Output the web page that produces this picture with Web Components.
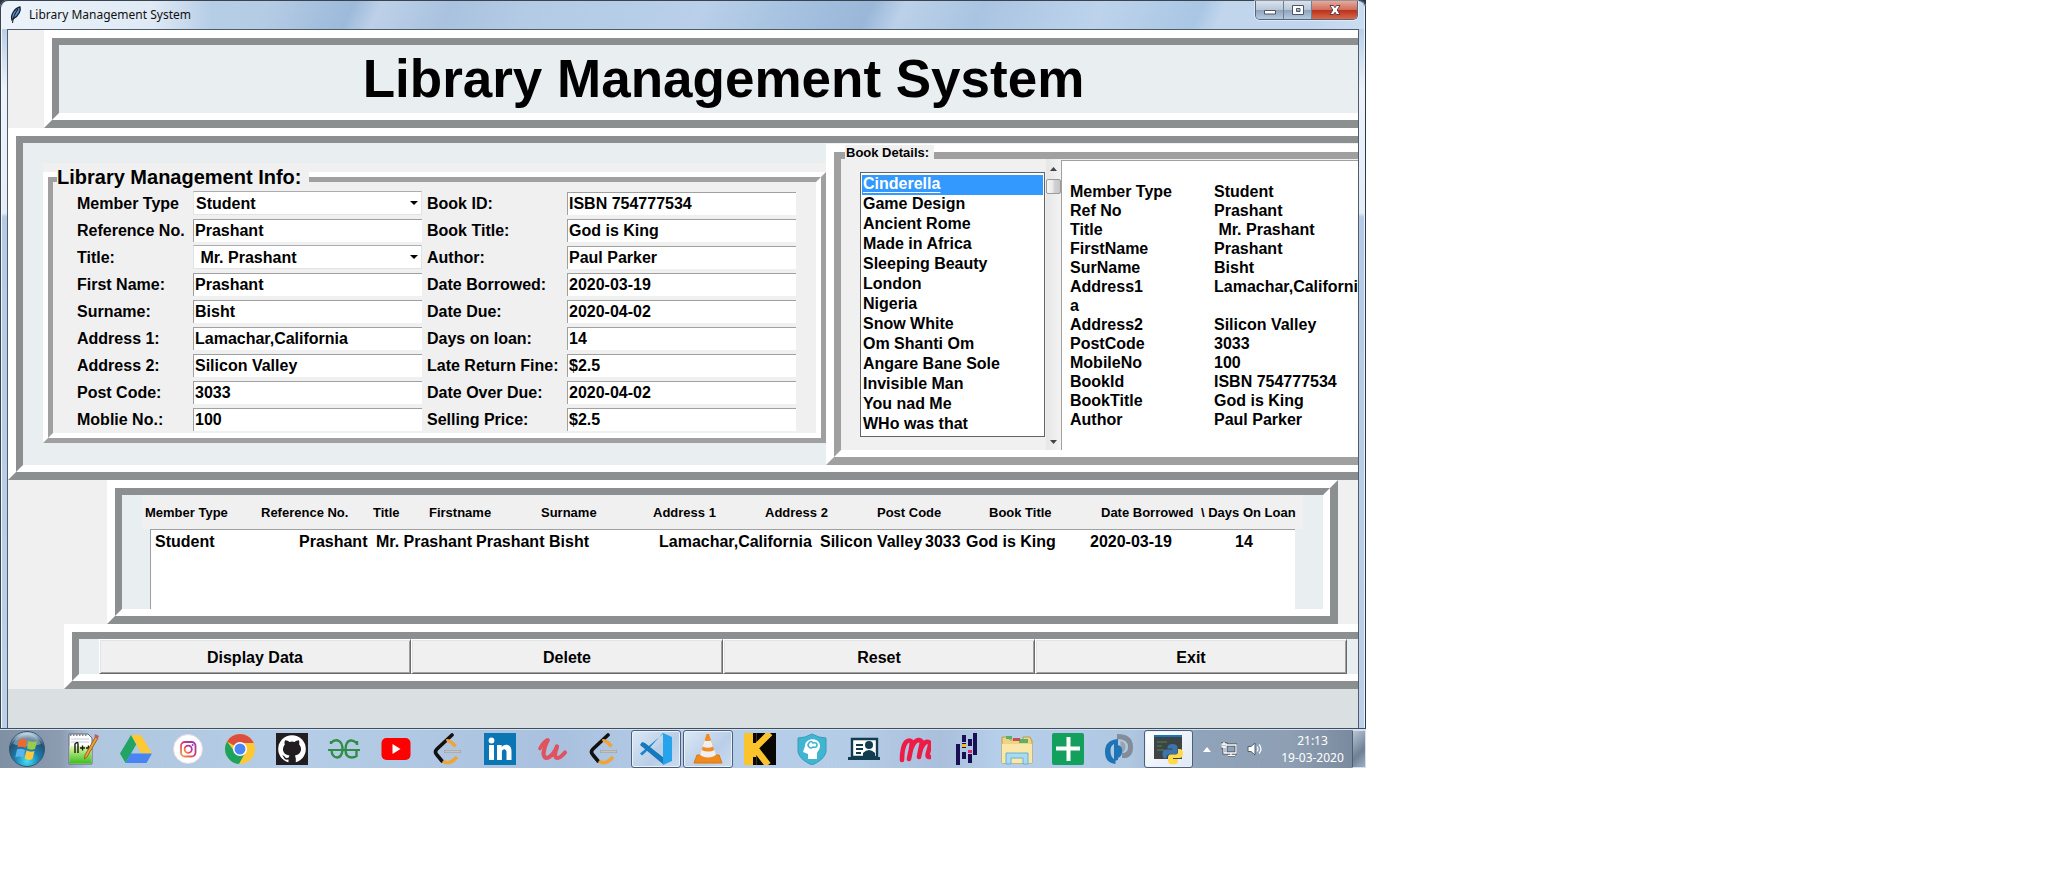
<!DOCTYPE html>
<html lang="en">
<head>
<meta charset="utf-8">
<title>Library Management System</title>
<style>
html { background: #fff; }
body { margin: 0; font: bold 16px/19px "Liberation Sans", Arial, sans-serif; color: #000; }
</style>
</head>
<body>
<desk-top>
  <app-window caption="Library Management System">
    <ridge-frame class="title"><h1>Library Management System</h1></ridge-frame>
    <ridge-frame class="main">
      <label-frame class="info" caption="Library Management Info:"><member-form></member-form></label-frame>
      <label-frame class="books" caption="Book Details:" heavy>
        <book-list></book-list>
        <scroll-bar></scroll-bar>
        <detail-text></detail-text>
      </label-frame>
    </ridge-frame>
    <ridge-frame class="records"><record-table></record-table></ridge-frame>
    <ridge-frame class="actions"><action-bar></action-bar></ridge-frame>
  </app-window>
  <task-bar></task-bar>
</desk-top>

<script>
function define(name, html, setup) {
  customElements.define(name, class extends HTMLElement {
    constructor() {
      super();
      const t = document.createElement('template');
      t.innerHTML = html;
      this.attachShadow({ mode: 'open' }).append(t.content.cloneNode(true));
    }
    connectedCallback() { if (setup) setup(this, this.shadowRoot); }
  });
}

define('desk-top', `
<style>
:host { display: flex; flex-direction: column; width: 100%; max-width: 1366px; background: #2b3240; overflow: hidden; }
</style><slot></slot>`);

define('app-window', `
<style>
:host { display: block; border-radius: 7px 7px 0 0; padding: 0 8px 0 7px; box-shadow: inset 1px 1px #3a4350, inset -1px 0 #2c3a4a, inset 2px 2px #f2f7fc, inset -2px 0 #e8f1fa;
  background: linear-gradient(#fff0 0, #fff0 30px, #eef3fa 90px, #e4ecf6 213px, #b4cae6 217px, #bcd0e8 100%) 0 0 / 100% 100%, #b9cfe8; }
header { display: flex; justify-content: space-between; height: 29px; margin: 0 -6px 0 -5px; padding: 0 6px 0 5px; border-radius: 6px 6px 0 0; 
  background: linear-gradient(90deg, #eef4fafa 0, #dfeaf5 150px, #b6cde6 210px, #b6cde600 300px), 
  linear-gradient(115deg, #b4cbe4 0, #b4cbe4 240px, #9dbadb 320px, #bdd0e8 345px, #a9c2df 410px, #b3cbe5 480px, #b9cfea 640px, #aac5e2 700px, #9ab7d9 790px, #bcd1e9 820px, #a9c4e2 890px, #bdd3ec 1000px, #a9c6e4 1090px, #c1d5ec 1110px, #c1d6ee 1200px, #e6eff8 1366px);
  background-clip: padding-box; border-top: 1px solid #3a4350; box-sizing: border-box; }
.caption { display: flex; gap: 6px; align-items: center; font: 12px/16px "Noto Sans", "Open Sans", sans-serif; color: #111; padding: 0 0 0 2px; }
.buttons { display: flex; height: 19px; border: 1px solid #56657a; border-top: 0; border-radius: 0 0 5px 5px; overflow: hidden; box-shadow: 0 0 0 1px #ffffff70; box-sizing: border-box; }
button { display: grid; place-items: center; width: 28px; padding: 0; border: 0; border-right: 1px solid #6f8094; background: linear-gradient(#d9e3ee 0, #b9c7d8 48%, #8fa3bc 52%, #b5cadf 100%); }
button.close { width: 45px; border: 0; background: linear-gradient(#e9a99b 0, #d0705d 48%, #b9321c 52%, #d9684a 100%); }
svg { display: block; }
main { display: flow-root; border: 1px solid #4f5c6b; border-bottom: 0; background: #f0f0f0; overflow: hidden; margin-right: -1px; }
main::after { content: ""; display: block; height: 39px; background: #dadfe1; }
::slotted(*) { display: block; }
::slotted(.title) { --fill: #e9eef1; margin: 0 -45px 0 36px; }
::slotted(.main) { margin-right: -45px; }
::slotted(.records) { margin: 0 20px 0 99px; }
::slotted(.actions) { margin: 0 -45px 0 56px; }
</style>
<header>
  <div class="caption">
    <svg width="14" height="18" viewBox="0 0 14 18"><path d="M3 14C1 9 6 2 11 1c1 3-1 9-7 12z" fill="#5c8fc8" stroke="#14202e" stroke-width="1.3"/><path d="M3.500 17C4 12 6 7 9 3" stroke="#10151c" fill="none"/></svg>
    <span id="cap"></span>
  </div>
  <div class="buttons">
    <button aria-label="Minimize"><svg width="14" height="14"><path d="M1.500 7.500h11v3.500h-11z" fill="#fff" stroke="#4c5666"/></svg></button>
    <button aria-label="Maximize"><svg width="14" height="14"><path d="M1.500 2.500h11v9h-11zM5.500 5.500v3h3.500v-3z" fill="#fff" fill-rule="evenodd" stroke="#4c5666"/></svg></button>
    <button class="close" aria-label="Close"><svg width="14" height="14"><path d="M2 2.500h3.500L7 4.700l1.500-2.200H12L9.200 7l2.800 4.500H8.500L7 9.300l-1.500 2.200H2L4.800 7z" fill="#fff" stroke="#5b4048"/></svg></button>
  </div>
</header>
<main><slot></slot></main>`, (el, r) => { r.getElementById('cap').textContent = el.getAttribute('caption'); });

define('ridge-frame', `
<style>
:host { display: block; }
.outer { border: 8px solid; border-color: #fff #8c8f8f #8c8f8f #fff; }
.inner { border: solid; border-width: 7px; border-color: #8c8f8f #fff #fff #8c8f8f; background: #e9eef1; display: flex; }
::slotted(h1) { flex: 1; margin: 0; padding: 4px 0; font-size: 53px; line-height: 60px; text-align: center; white-space: nowrap; }
::slotted(.info) { flex: 0 0 783px; margin: 20px 0 22px 20px; }
::slotted(.books) { flex: 1; }
::slotted(record-table), ::slotted(action-bar) { flex: 1; min-width: 0; }
</style><div class="outer"><div class="inner"><slot></slot></div></div>`);

define('label-frame', `
<style>
:host { display: block; position: relative; background: #f0f0f0; padding-top: 9px; box-sizing: border-box; --o: 5px; --i: 5px; }
:host([heavy]) { --o: 8px; --i: 7px; padding-top: 1px; }
.outer { border: var(--o) solid; border-color: #fff #a0a0a0 #a0a0a0 #fff; height: 100%; box-sizing: border-box; }
.inner { border: var(--i) solid; border-color: #a0a0a0 #fff #fff #a0a0a0; height: 100%; box-sizing: border-box; display: flex; }
.legend { position: absolute; left: 14px; top: 2px; background: #f0f0f0; padding-right: 8px; font-size: 20px; line-height: 24px; white-space: nowrap; }
:host([heavy]) .legend { left: 19px; top: 2px; font-size: 13px; line-height: 16px; padding: 0 5px 0 1px; }
::slotted(detail-text), ::slotted(member-form) { flex: 1; }
</style><div class="outer"><div class="inner"><slot></slot></div></div><div class="legend" id="cap"></div>`,
(el, r) => { r.getElementById('cap').textContent = el.getAttribute('caption'); });

define('form-field', `
<style>
:host { display: grid; grid-template-columns: var(--label, 116px) minmax(0, 1fr); align-items: center; height: 24px; }
label { white-space: nowrap; }
.box { display: grid; align-items: center; }
input, select { grid-area: 1 / 1; font: inherit; color: inherit; width: 100%; box-sizing: border-box; margin: 0; border-radius: 0; background: #fff; outline: 0; }
input { height: 23px; border: 0 solid #a0a0a0; border-width: 1px 0 0 1px; padding: 0 1px; }
select { height: 24px; appearance: none; border: 1px solid #e3e3e3; border-top-color: #abadb3; padding: 0 20px 0 2px; }
svg { grid-area: 1 / 1; justify-self: end; margin-right: 4px; pointer-events: none; }
</style><label for="f"></label><div class="box"></div>`, (el, r) => {
  r.querySelector('label').textContent = el.getAttribute('label');
  const v = el.getAttribute('value'), box = r.querySelector('.box');
  if (el.hasAttribute('choice')) {
    box.innerHTML = '<select id="f"><option></option></select><svg width="8" height="4"><path d="M0 0h8L4 4z"/></svg>';
    box.querySelector('option').textContent = v;
  } else {
    box.innerHTML = '<input id="f" type="text">';
    box.firstChild.value = v;
  }
});

define('member-form', `
<style>
:host { display: block; }
form { display: grid; grid-template-columns: 345px 369px; column-gap: 5px; row-gap: 3px; padding: 9px 20px 2px 24px; }
form-field:nth-child(even) { --label: 140px; }
</style>
<form>
<form-field label="Member Type" value="Student" choice></form-field><form-field label="Book ID:" value="ISBN 754777534"></form-field>
<form-field label="Reference No." value="Prashant"></form-field><form-field label="Book Title:" value="God is King"></form-field>
<form-field label="Title:" value="&nbsp;Mr. Prashant" choice></form-field><form-field label="Author:" value="Paul Parker"></form-field>
<form-field label="First Name:" value="Prashant"></form-field><form-field label="Date Borrowed:" value="2020-03-19"></form-field>
<form-field label="Surname:" value="Bisht"></form-field><form-field label="Date Due:" value="2020-04-02"></form-field>
<form-field label="Address 1:" value="Lamachar,California"></form-field><form-field label="Days on loan:" value="14"></form-field>
<form-field label="Address 2:" value="Silicon Valley"></form-field><form-field label="Late Return Fine:" value="$2.5"></form-field>
<form-field label="Post Code:" value="3033"></form-field><form-field label="Date Over Due:" value="2020-04-02"></form-field>
<form-field label="Moblie No.:" value="100"></form-field><form-field label="Selling Price:" value="$2.5"></form-field>
</form>`);

define('book-list', `
<style>
:host { display: block; padding: 13px 1px 0 19px; }
select { display: block; width: 185px; height: 265px; box-sizing: border-box; margin: 0; padding: 2px 1px; border: 1px solid #646464; border-radius: 0; font: inherit; color: #000; background: #fff; overflow: hidden; scrollbar-width: none; outline: 0; }
option { display: block; padding: 0 1px; height: 20px; min-height: 20px; font-weight: bold; line-height: 20px; box-sizing: border-box; }
option:checked { color: #fff; background: linear-gradient(#3399ff, #3399ff); text-decoration: underline; text-underline-offset: 3px; }
</style>
<select size="13" aria-label="Books">
<option selected>Cinderella</option><option>Game Design</option><option>Ancient Rome</option><option>Made in Africa</option><option>Sleeping Beauty</option><option>London</option><option>Nigeria</option><option>Snow White</option><option>Om Shanti Om</option><option>Angare Bane Sole</option><option>Invisible Man</option><option>You nad Me</option><option>WHo was that</option>
</select>`);

define('scroll-bar', `
<style>
:host { display: flex; flex-direction: column; align-items: center; width: 15px; background: linear-gradient(90deg, #e6e6e6, #f3f3f3); }
svg { margin: 8px 0; }
.thumb { width: 13px; height: 13px; border: 1px solid #9a9a9a; border-radius: 2px; background: linear-gradient(90deg, #f6f6f6, #e8e8ea 48%, #d3d3d6 52%, #c6c6ca); }
.down { margin-top: auto; margin-bottom: 6px; }
</style>
<svg width="7" height="4"><path d="M0 4h7L3.500 0z" fill="#444"/></svg>
<div class="thumb"></div>
<svg class="down" width="7" height="4"><path d="M0 0h7L3.500 4z" fill="#444"/></svg>`);

define('detail-text', `
<style>
:host { display: flex; padding-top: 1px; }
textarea { flex: 1; min-width: 0; box-sizing: border-box; margin: 0; border: 0 solid #a0a0a0; border-width: 1px 0 0 1px; border-radius: 0; padding: 2px 8px; font: inherit; line-height: 19px; color: #000; background: #fff; resize: none; overflow: hidden; outline: 0; tab-size: 144px; word-break: break-all; }
</style><textarea aria-label="Member details"></textarea>`, (el, r) => {
  r.querySelector('textarea').value = '\n' + [
    ['Member Type', 'Student'], ['Ref No', 'Prashant'], ['Title', '\u00a0Mr. Prashant'], ['FirstName', 'Prashant'], ['SurName', 'Bisht'],
    ['Address1', 'Lamachar,California'], ['Address2', 'Silicon Valley'], ['PostCode', '3033'], ['MobileNo', '100'],
    ['BookId', 'ISBN 754777534'], ['BookTitle', 'God is King'], ['Author', 'Paul Parker']].map(p => p.join('\t')).join('\n');
});

define('record-table', `
<style>
:host { display: block; }
table, thead, tbody { display: block; }
tr { display: grid; justify-content: start; }
th, td { padding: 0; text-align: left; white-space: nowrap; }
thead { background: #f0f0f0; margin: 0 20px; font-size: 13px; }
thead tr { grid-template-columns: 116px 112px 56px 112px 112px 112px 112px 112px 112px 100px auto; padding: 2px 3px 0; line-height: 32px; }
tbody { margin: 0 28px; background: #fff; border: solid #a0a0a0; border-width: 1px 0 0 1px; height: 79px; }
tbody tr { grid-template-columns: 144px 77px 100px 73px 110px 161px 105px 41px 124px 145px auto; padding: 2px 4px; }
</style>
<table><thead><tr><th>Member Type</th><th>Reference No.</th><th>Title</th><th>Firstname</th><th>Surname</th><th>Address 1</th><th>Address 2</th><th>Post Code</th><th>Book Title</th><th>Date Borrowed</th><th>\\ Days On Loan</th></tr></thead>
<tbody><tr><td>Student</td><td>Prashant</td><td>Mr. Prashant</td><td>Prashant</td><td>Bisht</td><td>Lamachar,California</td><td>Silicon Valley</td><td>3033</td><td>God is King</td><td>2020-03-19</td><td>14</td></tr></tbody></table>`);

define('action-bar', `
<style>
:host { display: flex; padding: 0 41px 0 20px; }
button { flex: 1; height: 35px; font: inherit; color: inherit; padding: 1px 0 0; background: #f0f0f0; border: 1px solid; border-color: #fff #696969 #696969 #fff; border-radius: 0; box-shadow: inset 1px 1px #e3e3e3, inset -1px -1px #a0a0a0; }
</style><button>Display Data</button><button>Delete</button><button>Reset</button><button>Exit</button>`);

const leet = `<path d="M20 2 5 16q-3 3 0 6l5 6" fill="none" stroke="#111" stroke-width="3.600" stroke-linecap="round"/><path d="M14.500 8q3-1.500 9 5.500" fill="none" stroke="#f0a436" stroke-width="3.500"/><path d="M11 28q6 5 14-4" fill="none" stroke="#f0a436" stroke-width="3.500"/><path d="M12 18.500h17" stroke="#999" stroke-width="3"/><path d="M12.500 18.500h16" stroke="#c3c3c3" stroke-width="2"/>`;
const icons = [
['Notepad++', `<path d="M1 1h19l4 4v26H1z" fill="#fff" stroke="#667"/><path d="M1.500 13h22v17.500h-22z" fill="url(#npp)"/><path d="M2 2h18" stroke="#888" stroke-dasharray="1.500 1.500" stroke-width="2"/><path d="M3 6h18M3 9h18" stroke="#c3ccd8"/><path d="M7 20v-9q3-3 3 0v9M12 15h5M14.500 12.500v5M18 15h5M20.500 12.500v5" fill="none" stroke="#141a10" stroke-width="1.400"/><path d="m28 3 2 2-11 19-2.500 2 .5-4z" fill="#e9a53a" stroke="#9c6420"/><path d="m27 1 4 2-1.500 3-3-2z" fill="#c8565a"/>`],
['Google Drive', `<path d="M11 2h10l11 18.500H21.500z" fill="#fbc934"/><path d="M11 2 0 20.500 5.500 30l10.700-18.500z" fill="#21a464"/><path d="M10.500 20.500H32L26.500 30h-21z" fill="#4a84f0"/>`],
['Instagram', `<circle cx="16" cy="16" r="14.500" fill="#fff" stroke="#e6d9e2"/><rect x="9" y="9" width="14.500" height="14.500" rx="4" fill="none" stroke="url(#ig)" stroke-width="1.800"/><circle cx="16.200" cy="16.200" r="3.600" fill="none" stroke="url(#ig)" stroke-width="1.800"/><circle cx="20.600" cy="12" r="1" fill="#9a36b8"/>`],
['Chrome', `<circle cx="16" cy="16" r="15" fill="#fcc934"/><path d="M16 16 3 8.500A15 15 0 0 1 29 8.500L29.600 10H16z" fill="#db4f40"/><path d="M3 8.500A15 15 0 0 0 15 31l6-11-10.500-1.500z" fill="#1da260"/><circle cx="16" cy="16" r="7" fill="#fff"/><circle cx="16" cy="16" r="5.500" fill="#4a87f4"/>`],
['GitHub', `<path d="M0 0h32v32H0z" fill="#211d20"/><circle cx="16" cy="16" r="13.800" fill="#fff"/><path d="M12.500 30.500v-4c-3 .6-4.200-.5-5-2.500l-1.300-1.500c2.500-.4 2.500 2.500 5 2.500l1.500-.5.800-2C8 21.700 6.800 18.500 7 15.500q.2-2.200 1.800-4c-.5-1.500-.3-3 .3-4.300 2 .1 3.200.8 4.300 1.700q2.600-.7 5.200 0c1.200-.9 2.600-1.600 4.300-1.700q.9 2.200.3 4.300 1.700 1.800 1.800 4c.2 3-1.300 6.200-6 7l.8 3v5z" fill="#211d20"/>`],
['GeeksforGeeks', `<path d="M0 17h32" stroke="#2f8d46" stroke-width="2"/><path d="M3 11V8M3 10q3-3.500 7-2.500 5 2 4.500 10-1 7-5.500 7-5-.5-5.500-7M29 8v4M28.500 10q-3-3-6-2.500-5 1-5 9 0 8 6 8 3 0 5-1.500V17" fill="none" stroke="#2f8d46" stroke-width="2.400"/>`],
['YouTube', `<rect x="1.500" y="5" width="29" height="22" rx="5" fill="#f00"/><path d="m12.500 11 8 5-8 5z" fill="#fff"/>`],
['LeetCode', leet],
['LinkedIn', `<path d="M0 0h32v32H0z" fill="#0a76b4"/><circle cx="7.500" cy="7.500" r="2.900" fill="#fff"/><path d="M5 12h5v15H5zM13 12h4.700v2c3-4 9.800-3 9.800 4v9h-5v-8c0-4-4.600-3.500-4.600 0v8H13z" fill="#fff"/>`],
['Udemy', `<path d="M4 15.500q4-8 8-8.500" fill="none" stroke="#e0525d" stroke-width="3.600" stroke-linecap="round"/><path d="M11.500 7.500Q8 14 7.500 20q0 6 5 4.500 5.500-3 8.500-11-3 9-1 11 3 2 9-5" fill="none" stroke="#e0525d" stroke-width="4.200" stroke-linecap="round" stroke-linejoin="round"/>`],
['LeetCode', leet],
['Visual Studio Code', `<path d="M23 0 5 20l-3 2.500L0 20.500 23 1z" fill="#1c86cc"/><path d="m2 9 3 1 19 15v7L0 12z" fill="#1779bd"/><path d="M23 0 32 4v24l-9 4z" fill="#26a3ec"/><path d="m23 9-9 7 9 7z" fill="#b9cfe8"/>`],
['VLC', `<path d="M5 22h22l3 8H2z" fill="#f08a1c" stroke="#d9761a"/><path d="M14.500 1h2.500l7 22q-8 5-16 0z" fill="#f48b20"/><path d="m12.500 7.500-2 6q5.500 2.500 10.500 0l-2-6q-3 1-6.500 0zM9.500 17l-1.500 5q8 5 16 0l-1.500-5q-6 3-13 0z" fill="#eef0f4"/>`],
['Kaggle', `<path d="M0 0h32v32H0z" fill="#080704"/><path d="M0 0h12v32H0z" fill="#fcc42c"/><path d="M4 0h5v32H4zM26 0 11 15l13 17" fill="none" stroke="#fcc42c" stroke-width="6.500"/><path d="M10.500 0v10M10.500 24v8" stroke="#080704" stroke-width="3"/>`],
['Mind training', `<path d="M16 1q7 4 14 4v14q-2 8-14 13Q4 27 2 19V5q7 0 14-4z" fill="#3fb5d2" stroke="#399bb6"/><path d="M12 26v-5l-5-2 2-6c0-9 15-9 15 0 0 4-3 5-3 8v5z" fill="#fff"/><path d="M13 10q2-3 4 0 4-1 4 2 0 3-4 2-2 2-4 0-2-2 0-4z" fill="none" stroke="#3fb5d2" stroke-width="1.600"/>`],
['Online course', `<path d="M4 6h25v18H4z" fill="#fff" stroke="#123c50" stroke-width="2.400"/><path d="M0 24h32v3H0z" fill="#123c50"/><path d="M8 12h7M8 16h7M8 20h5" stroke="#123c50" stroke-width="2"/><circle cx="21" cy="12" r="4" fill="#123c50"/><path d="M15 23v-3q6-6 12 0v3z" fill="#123c50"/>`],
['Miro', `<path d="M3 27Q3 14 7 9q4-3 6 0-1 9-3 17Q12 12 17 8q4-2 6 1-2 9-3 15Q22 12 27 9q4-1 4 3c-1 7-5 12 0 12" fill="none" stroke="#ec1c46" stroke-width="4.600" stroke-linecap="round" stroke-linejoin="round"/>`],
['Pandas', `<path d="M6 11h4v21H6zM12 2h4v7h-4zM12 10h4v5h-4zM12 19h4v7h-4zM18 6h4v7h-4zM18 21h4v9h-4zM23 0h4v22h-4z" fill="#1a0f54"/><path d="M12 11h4v3h-4z" fill="#f2bf15"/><path d="M18 17h4v3h-4z" fill="#e2266f"/>`],
['Explorer', `<path d="M1 6V4h6l2 3h13V4h7l2 4v22H1z" fill="#f0d483" stroke="#bd9a46"/><path d="M5 3h6v3H5zM18 6h9v4h-9z" fill="#58b368"/><path d="M12 5h7v3h-7z" fill="#cf4e4e"/><path d="M1 11h30v19H1z" fill="#fbe8a8"/><path d="M5 31V20h22v11h-5v-6H10v6z" fill="#a6dbf1" stroke="#6faed0"/>`],
['Add', `<rect width="32" height="32" rx="2" fill="#12a05c"/><path d="M14.500 4h4v9.500H28v4h-9.500V28h-4V17.500H4v-4h10.500z" fill="#fff"/>`],
['Sync', `<path d="M14 1Q30 1 30 14q0 12-11 11v-5q6 0 6-6 0-8-11-8z" fill="#838c97"/><path d="M17.500 8q5 1 5 6t-5 6z" fill="#9aa2ac"/><path d="M15 6v21l-4 1V11q-4 2-3.500 8 .5 6 5 8v4Q2 30 2 18.500 2 7 15 6z" fill="#1e74b4"/><path d="M15 12q5 1 4 8-1 4-4 5z" fill="#1e74b4"/>`],
['Python', `<path d="M1 2h28v24H1z" fill="#3e4346"/><path d="M1 2h28v2H1z" fill="#1976b8"/><path d="M4 9h10M4 13h5M4 17h7" stroke="#4c8a4a"/><path d="M14.500 14.500q0-3.500 5-3.500t5 3.500v4q0 3-3 3h-5q-3 0-3 3v1h-1q-3 0-3-4.500t3.500-4.500h6.500v-1h-5z" fill="#3a75ab"/><path d="M25 16h1.500q3.500 0 3.500 4.500T26.500 25H20v1h5v2q0 3.500-5 3.500t-5-3.500v-3.500q0-3 3-3h4.500q2.500 0 2.500-3z" fill="#ffda4b"/>`]
];

define('task-bar', `
<style>
:host { display: flex; align-items: stretch; height: 38px; border-top: 1px solid #3f4d5e; box-shadow: inset 0 1px #d3e2f1; color: #fff; 
  background: linear-gradient(90deg, #7f90a5 0, #8b9bb0 60px, #afc6df 90px, #b6cde7 300px, #a9c1de 560px, #b6cee9 700px, #b5cce7 860px, #a9bfdb 940px, #b6cfea 1000px, #b0c7e2 1130px, #8fa3ba 1200px, #8e9fb3 1290px, #76869a 100%); padding-top: 1px; }
button { display: grid; place-items: center; padding: 0; border: 0; background: none; margin: 0; }
.start { width: 58px; padding-right: 4px; }
nav { display: flex; }
nav button { width: 52px; box-sizing: border-box; border: 1px solid transparent; border-radius: 3px; }
nav button:nth-child(n+16) { width: 51px; }
nav button.open { margin: 0 1px; width: 50px; border-color: #4e6079; background: linear-gradient(135deg, #dce8f5, #b9cee7 60%, #cbdcef); box-shadow: inset 0 0 0 1px #e9f1fa; }
nav button.open:last-child { background: linear-gradient(135deg, #fff, #dfe8f3); width: 49px; margin: 0 2px 0 0; }
svg { display: block; }
.tray { flex: 1; display: flex; align-items: center; gap: 10px; padding-left: 8px; }
time { flex: 1; font: 12px/17px "Noto Sans", "Open Sans", sans-serif; text-align: center; }
.desk { width: 14px; border: 1px solid #d5e0ec; border-left-color: #4e5e72; background: linear-gradient(135deg, #b8c5d4, #6f8095 60%, #9fb0c4); }
</style>
<button class="start" aria-label="Start"><svg width="36" height="36" viewBox="0 0 36 36"><defs><radialGradient id="orb" cx="50%" cy="85%" r="80%"><stop offset="0" stop-color="#3fe0f8"/><stop offset=".45" stop-color="#1b7cae"/><stop offset=".8" stop-color="#245070"/><stop offset="1" stop-color="#a9c4d6"/></radialGradient></defs><circle cx="18" cy="18" r="17.500" fill="url(#orb)" stroke="#35566e"/><path d="M4 13Q9 2 18 2t14 11q-14 5-28 0z" fill="#fff" opacity=".35"/><path d="M10 9q4-2 8 .5L16.500 17q-4-2-8-.5z" fill="#ee6a2c"/><path d="M19.500 10q4 2 8.500 0l-2 8q-4 1.500-8-.5z" fill="#9bcc44"/><path d="M8 18.500q4-1.500 8 .5l-1.700 8q-4-2.500-8-.5z" fill="#5cb4ec"/><path d="M17.500 19.500q4 2 8 .5l-2 8q-4 2-8-.5z" fill="#fcc93c"/></svg></button>
<nav></nav>
<div class="tray">
  <svg width="8" height="5"><path d="M0 5h8L4 0z" fill="#fff"/></svg>
  <svg width="16" height="16" viewBox="0 0 16 16"><path d="M5 4h10v8H5zM7 14.500h7M10 12v2M3 1v6M1 3h4v3H1zM3 7v5h2" fill="none" stroke="#454f5c" stroke-width="3"/><path d="M5 4h10v8H5zM7 14.500h7M10 12v2M3 1v6M1 3h4v3H1zM3 7v5h2" fill="none" stroke="#fff" stroke-width="1.300"/></svg>
  <svg width="16" height="16" viewBox="0 0 16 16"><path d="M1 5.500h3L8 2v12l-4-3.500H1z" fill="#fff" stroke="#556170"/><path d="M10 5.500q2 2.500 0 5M12 3.500q4 4.500 0 9" fill="none" stroke="#fff" stroke-width="1.200"/></svg>
  <time datetime="2020-03-19T21:13">21:13<br>19-03-2020</time>
</div>
<button class="desk" aria-label="Show desktop"></button>`, (el, r) => {
  const open = new Set([11, 12, 21]);
  const defs = '<defs><linearGradient id="npp" x2="0" y2="1"><stop stop-color="#e8f6b0"/><stop offset="1" stop-color="#38c018"/></linearGradient><linearGradient id="ig" x1="0" y1="1" x2="1" y2="0"><stop stop-color="#f7a13c"/><stop offset=".5" stop-color="#e0356a"/><stop offset="1" stop-color="#8a36c4"/></linearGradient></defs>';
  r.querySelector('nav').innerHTML = icons.map(([name, art], i) =>
    `<button aria-label="${name}"${open.has(i) ? ' class="open"' : ''}><svg width="32" height="32" viewBox="0 0 32 32">${i === 0 || i === 2 ? defs : ''}${art}</svg></button>`).join('');
});
</script>
</body>
</html>
